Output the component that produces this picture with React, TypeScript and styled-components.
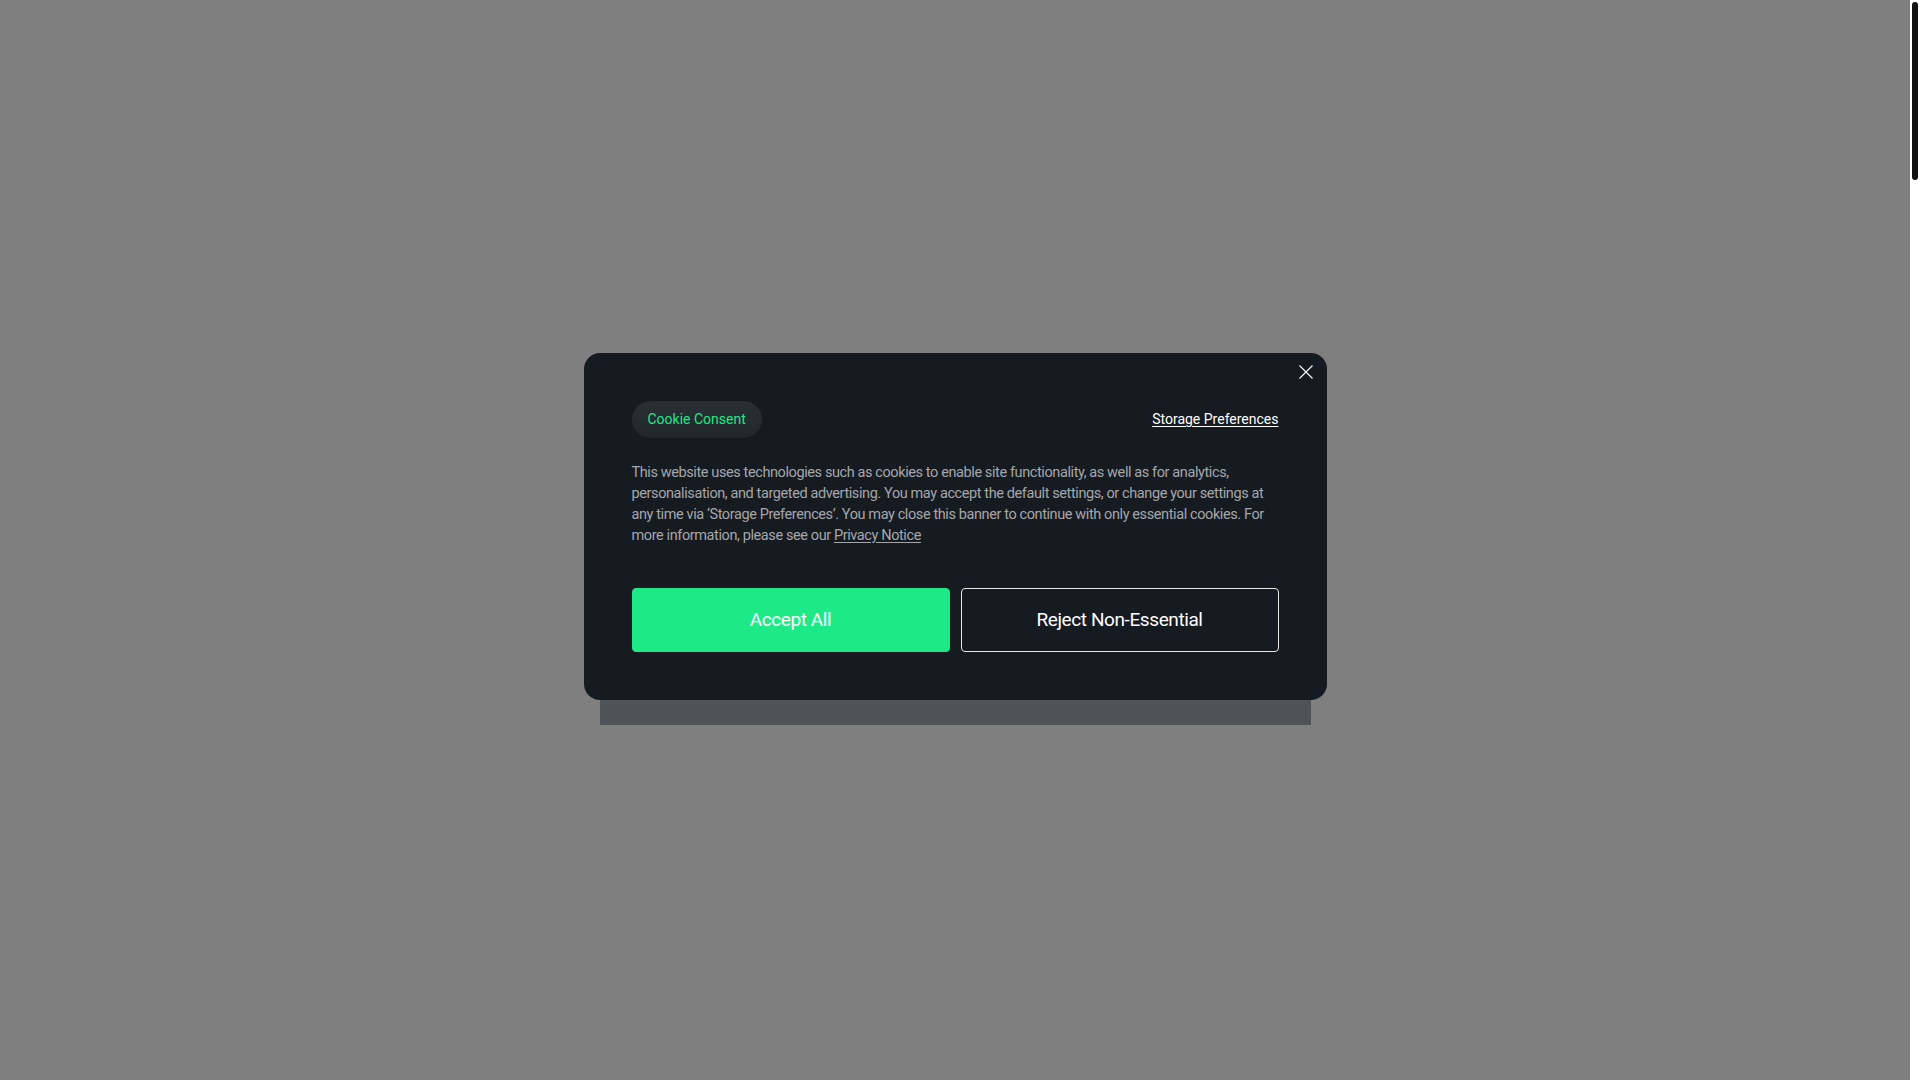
import React from "react";
import styled, { createGlobalStyle } from "styled-components";

const GlobalStyle = createGlobalStyle`
	html, body {
		margin: 0;
		padding: 0;
		background: #ffffff;
		font-family: Roboto, "Noto Sans", sans-serif;
	}
`;

const Shell = styled.div`
	display: flex;
	height: 100vh;
	overflow: hidden;
`;

const Viewport = styled.div`
	flex: 1;
	position: relative;
	background: #ffffff;
`;

const ScrollTrack = styled.div`
	width: 10px;
	flex-shrink: 0;
	background: #ffffff;
	padding-top: 2px;
	box-sizing: border-box;
`;

const ScrollThumb = styled.div`
	width: 6px;
	height: 178px;
	margin: 0 auto;
	border-radius: 3px;
	background: #111111;
`;

const Overlay = styled.div`
	position: absolute;
	inset: 0;
	background: rgba(0, 0, 0, 0.5);
	display: flex;
	align-items: center;
	justify-content: center;
`;

const Stack = styled.div`
	position: relative;
	padding-bottom: 25px;
	margin-bottom: 3px;

	&::before {
		content: "";
		position: absolute;
		left: 16px;
		right: 16px;
		bottom: 0;
		height: 60px;
		background: #4f5256;
	}
`;

const Modal = styled.div`
	position: relative;
	z-index: 1;
	width: 743px;
	box-sizing: border-box;
	padding: 48px 48px 48px;
	background: #161a21;
	border-radius: 16px;
`;

const CloseButton = styled.button`
	position: absolute;
	top: 11px;
	right: 13px;
	width: 16px;
	height: 16px;
	padding: 0;
	margin: 0;
	border: none;
	background: none;
	cursor: pointer;
	display: flex;
	align-items: center;
	justify-content: center;

	svg {
		width: 14px;
		height: 14px;
	}
`;

const Header = styled.div`
	display: flex;
	justify-content: space-between;
	align-items: center;
`;

const Pill = styled.span`
	display: inline-flex;
	align-items: center;
	height: 37px;
	padding: 0 16px;
	border-radius: 19px;
	background: linear-gradient(180deg, #2a2f34 0%, #22272b 100%);
	color: #1de987;
	font-size: 14px;
`;

const TextLink = styled.a`
	color: inherit;
	text-decoration: underline;
	text-underline-offset: 2px;
	text-decoration-thickness: 1px;
	cursor: pointer;
`;

const StorageLink = styled(TextLink)`
	color: #ffffff;
	font-size: 14px;
`;

const Body = styled.p`
	margin: 24px 0 0;
	font-size: 14.5px;
	line-height: 21px;
	letter-spacing: -0.4px;
	color: #a4a7ab;
`;

const Actions = styled.div`
	display: grid;
	grid-template-columns: 1fr 1fr;
	gap: 11px;
	margin-top: 42px;
`;

const ActionButton = styled.button<{ $primary?: boolean }>`
	height: 64px;
	border-radius: 4px;
	font-family: inherit;
	font-size: 19px;
	letter-spacing: -0.4px;
	color: #ffffff;
	cursor: pointer;
	background: ${(props) => (props.$primary ? "#1de987" : "transparent")};
	border: ${(props) =>
		props.$primary ? "1px solid #1de987" : "1px solid #e8e8e8"};
`;

function CloseIcon() {
	return (
		<svg viewBox="0 0 14 14" fill="none">
			<path d="M0.5 0.5L13.5 13.5M13.5 0.5L0.5 13.5" stroke="#ffffff" strokeWidth="1.1" />
		</svg>
	);
}

function App() {
	return (
		<>
			<GlobalStyle />
			<Shell>
				<Viewport>
					<Overlay>
						<Stack>
							<Modal>
								<CloseButton aria-label="Close">
									<CloseIcon />
								</CloseButton>
								<Header>
									<Pill>Cookie Consent</Pill>
									<StorageLink>Storage Preferences</StorageLink>
								</Header>
								<Body>
									This website uses technologies such as cookies to enable site
									functionality, as well as for analytics, personalisation, and
									targeted advertising. You may accept the default settings, or
									change your settings at any time via ‘Storage Preferences’. You
									may close this banner to continue with only essential cookies.
									For more information, please see our{" "}
									<TextLink>Privacy Notice</TextLink>
								</Body>
								<Actions>
									<ActionButton $primary>Accept All</ActionButton>
									<ActionButton>Reject Non-Essential</ActionButton>
								</Actions>
							</Modal>
						</Stack>
					</Overlay>
				</Viewport>
				<ScrollTrack>
					<ScrollThumb />
				</ScrollTrack>
			</Shell>
		</>
	);
}

export default App;
